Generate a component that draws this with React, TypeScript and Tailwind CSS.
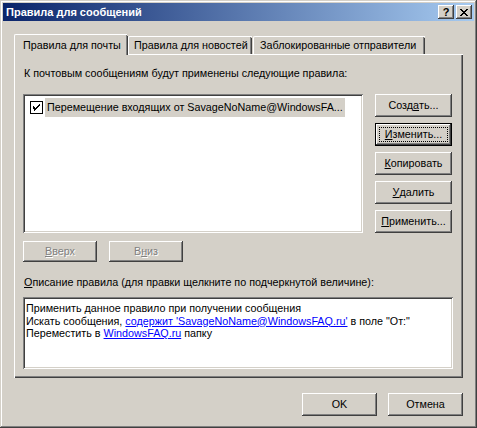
import React from "react";

const raised =
  "shadow-[inset_-1px_-1px_#404040,inset_1px_1px_#ffffff,inset_-2px_-2px_#808080,inset_2px_2px_#d4d0c8]";
const sunken =
  "shadow-[inset_1px_1px_#808080,inset_-1px_-1px_#ffffff,inset_2px_2px_#404040,inset_-2px_-2px_#d4d0c8]";

const font = { fontFamily: '"Liberation Sans", Arial, sans-serif' };

function Btn({
  children,
  w = "w-[77px]",
  h = "h-[23px]",
  isDefault = false,
  disabled = false,
}: {
  children: React.ReactNode;
  w?: string;
  h?: string;
  isDefault?: boolean;
  disabled?: boolean;
}) {
  if (isDefault) {
    return (
      <div className={`${w} ${h} border border-black bg-[#d4d0c8] flex`}>
        <div className={`flex-1 ${raised} flex items-center justify-center p-[3px]`}>
          <div className="w-full h-full border border-dotted border-black flex items-center justify-center text-black">
            {children}
          </div>
        </div>
      </div>
    );
  }
  return (
    <div
      className={`${w} ${h} bg-[#d4d0c8] ${raised} flex items-center justify-center ${
        disabled ? "text-[#808080] [text-shadow:1px_1px_0_#ffffff]" : "text-black"
      }`}
    >
      {children}
    </div>
  );
}

function CaptionButton({ children }: { children: React.ReactNode }) {
  return (
    <div className={`w-[16px] h-[14px] bg-[#d4d0c8] ${raised} flex items-center justify-center`}>
      {children}
    </div>
  );
}

export default function App() {
  return (
    <div
      className={`w-[477px] h-[428px] bg-[#d4d0c8] text-[10.75px] leading-[13px] text-black p-[3px] flex flex-col shadow-[inset_-1px_-1px_#404040,inset_1px_1px_#d4d0c8,inset_-2px_-2px_#808080,inset_2px_2px_#ffffff]`}
      style={font}
    >
      {/* caption */}
      <div className="h-[18px] flex items-center pl-[3px] pr-[2px] bg-[linear-gradient(to_right,#0a246a,#a6caf0)]">
        <span className="text-white font-bold text-[11px] flex-1">Правила для сообщений</span>
        <div className="flex gap-[2px]">
          <CaptionButton>
            <span className="font-bold text-[11px] leading-none text-black mt-[1px]">?</span>
          </CaptionButton>
          <CaptionButton>
            <svg width="8" height="7" viewBox="0 0 8 7" shapeRendering="crispEdges">
              <path
                d="M0 0h2v1H0zM6 0h2v1H6zM1 1h2v1H1zM5 1h2v1H5zM2 2h4v1H2zM3 3h2v1H3zM2 4h4v1H2zM1 5h2v1H1zM5 5h2v1H5zM0 6h2v1H0zM6 6h2v1H6z"
                fill="#000"
              />
            </svg>
          </CaptionButton>
        </div>
      </div>

      {/* tabs + page */}
      <div className="ml-[11px] mr-[11px] mt-[12px] flex flex-col">
        <div className="flex items-end h-[21px] relative z-10">
          <div className="h-[21px] w-[113px] bg-[#d4d0c8] border-t border-l border-white rounded-tl-[2px] shadow-[inset_-1px_0_#808080,inset_-2px_0_#d4d0c8] relative flex items-start pl-[8px] pt-[4px] -mb-[1px] after:content-[''] after:absolute after:right-[-1px] after:top-[1px] after:bottom-0 after:w-[1px] after:bg-[#404040]">
            Правила для почты
          </div>
          <div className="h-[18px] w-[124px] ml-[1px] border-t border-l border-white rounded-tl-[2px] relative flex items-start pl-[5px] pt-[2px] after:content-[''] after:absolute after:right-0 after:top-[1px] after:bottom-0 after:w-[1px] after:bg-[#404040] before:content-[''] before:absolute before:right-[1px] before:top-0 before:bottom-0 before:w-[1px] before:bg-[#808080]">
            Правила для новостей
          </div>
          <div className="h-[18px] w-[172px] ml-[1px] border-t border-l border-white rounded-tl-[2px] relative flex items-start pl-[6px] pt-[2px] after:content-[''] after:absolute after:right-0 after:top-[1px] after:bottom-0 after:w-[1px] after:bg-[#404040] before:content-[''] before:absolute before:right-[1px] before:top-0 before:bottom-0 before:w-[1px] before:bg-[#808080]">
            Заблокированные отправители
          </div>
        </div>

        <div className="h-[324px] border-t border-l border-white shadow-[inset_-1px_-1px_#404040,inset_-2px_-2px_#808080] flex flex-col pl-[8px] pr-[11px]">
          <div className="pl-[1px] mt-[12px] h-[13px]">
            К почтовым сообщениям будут применены следующие правила:
          </div>

          <div className="flex mt-[14px] gap-[12px]">
            <div className={`w-[341px] h-[139px] bg-white ${sunken} p-[2px]`}>
              <div className="flex items-center mt-[2px] pl-[5px] h-[19px]">
                <svg width="13" height="13" viewBox="0 0 13 13" shapeRendering="crispEdges" className="shrink-0">
                  <rect x="0.5" y="0.5" width="12" height="12" fill="#fff" stroke="#000" />
                  <path
                    d="M9 3h1v1H9zM8 4h2v1H8zM3 5h1v1H3zM7 5h2v1H7zM3 6h2v1H3zM6 6h2v1H6zM3 7h4v1H3zM4 8h2v1H4zM4 9h1v1H4z"
                    fill="#000"
                  />
                </svg>
                <div className="ml-[2px] h-[19px] bg-[#d4d0c8] flex items-center px-[2px] whitespace-nowrap">
                  Перемещение входящих от SavageNoName@WindowsFA...
                </div>
              </div>
            </div>

            <div className="flex flex-col gap-[6px]">
              <Btn>
                Созд<span className="underline">а</span>ть...
              </Btn>
              <Btn isDefault>
                <span className="underline">И</span>зменить...
              </Btn>
              <Btn>
                <span className="underline">К</span>опировать
              </Btn>
              <Btn>
                <span className="underline">У</span>далить
              </Btn>
              <Btn>
                <span className="underline">П</span>рименить...
              </Btn>
            </div>
          </div>

          <div className="flex gap-[12px] mt-[8px]">
            <Btn w="w-[74px]" h="h-[21px]" disabled>
              <span className="underline">В</span>верх
            </Btn>
            <Btn w="w-[74px]" h="h-[21px]" disabled>
              В<span className="underline">н</span>из
            </Btn>
          </div>

          <div className="mt-[14px] h-[13px] pl-[1px]">
            <span className="underline">О</span>писание правила (для правки щелкните по подчеркнутой величине):
          </div>

          <div className={`mt-[8px] h-[72px] w-[430px] bg-white ${sunken} px-[3px] py-[5px] leading-[12.5px]`}>
            <div>Применить данное правило при получении сообщения</div>
            <div>
              Искать сообщения,{" "}
              <span className="text-[#0000ff] underline">содержит 'SavageNoName@WindowsFAQ.ru'</span> в поле "От:"
            </div>
            <div>
              Переместить в <span className="text-[#0000ff] underline">WindowsFAQ.ru</span> папку
            </div>
          </div>
        </div>
      </div>

      <div className="flex justify-end gap-[11px] mr-[11px] mt-[15px]">
        <Btn w="w-[75px]" h="h-[23px]">OK</Btn>
        <Btn w="w-[75px]" h="h-[23px]">Отмена</Btn>
      </div>
    </div>
  );
}
